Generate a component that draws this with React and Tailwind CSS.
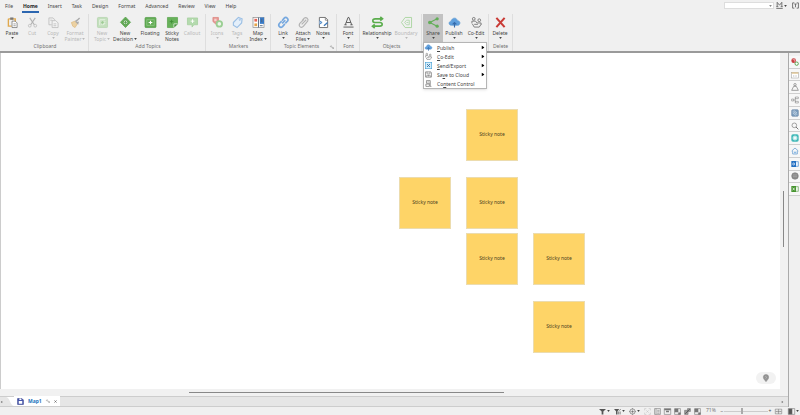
import React from "react";

const art = {
  paste: (
    <>
      <path d="M3 4h15v7M3 4v16h7" stroke="#e0a84e" strokeWidth="3" />
      <rect x="7" y="1" width="7" height="5" fill="#777" stroke="none" />
      <path d="M11 9h7l4 4v10H11z" fill="#fff" stroke="#666" />
      <path d="M14 15h5M14 19h5" stroke="#777" />
    </>
  ),
  cut: (
    <>
      <path d="M6 2l10 15M18 2L8 17" strokeWidth="2.5" />
      <circle cx="6" cy="19" r="3" />
      <circle cx="18" cy="19" r="3" />
    </>
  ),
  copy: (
    <>
      <path d="M8 17H2V2h9l3 3v2" />
      <path d="M9 8h8l5 5v10H9z" fill="#f7f7f7" />
      <path d="M12 15h6M12 19h6M5 7h4" />
    </>
  ),
  brush: (
    <>
      <path d="M3 12l8-3 5 6-5 8-5-3z" fill="#ecd2a4" stroke="#dcb87c" />
      <path d="M12 9l4-2 5-5M12 9l5 5 1-4" stroke="#aaa" strokeWidth="3" />
    </>
  ),
  topic: (
    <>
      <rect x="1" y="1" width="22" height="22" rx="2" fill="#c3dfbd" stroke="#b2d3ab" />
      <path d="M6 18V6h12M9 18l9-9M13 18l5-5" stroke="#e9f5e6" strokeWidth="2" />
      <path d="M12 9v6M9 12h6" stroke="#9ccb93" strokeWidth="2" />
    </>
  ),
  decision: (
    <>
      <path d="M12 0l11 11.500L12 23 1 11.500z" fill="#64ad57" stroke="#509c45" />
      <circle cx="12" cy="11.500" r="5" fill="#e7f4e4" stroke="#418c39" />
      <path d="M12 8v7M8.500 11.500h7" stroke="#559d4a" strokeWidth="2" />
    </>
  ),
  floating: (
    <>
      <rect x="0" y="1" width="24" height="22" rx="2" fill="#63ad55" stroke="#519b46" />
      <rect x="4" y="6" width="16" height="12" stroke="#95c98c" />
      <path d="M12 8v8M8 12h8" stroke="#fff" strokeWidth="2.500" />
    </>
  ),
  sticky: (
    <>
      <path d="M1 1h22v14l-8 8H1z" fill="#67b15a" stroke="#54a047" />
      <path d="M15 23v-8h8" fill="#448e3a" stroke="#fff" />
      <path d="M10 6v8M6 10h8" stroke="#3f8c36" strokeWidth="2" />
    </>
  ),
  callout: (
    <>
      <path d="M1 2h22v15h-8l-4 5v-5H1z" fill="#b4daae" stroke="#a1ce99" />
      <path d="M12 5v8M8 9h8" stroke="#fff" strokeWidth="2" />
    </>
  ),
  markers: (
    <>
      <path d="M2 1h12v11l-6 3-6-5z" fill="#e79a96" stroke="#da7d78" />
      <path d="M5 5h5M5 8h5" stroke="#fff" />
      <circle cx="16" cy="15" r="6" fill="#edf7ea" stroke="#9bcf94" strokeWidth="4" />
    </>
  ),
  tag: (
    <>
      <path d="M3 12L14 1l8 3-1 9-10 10-8-5z" fill="#e4effa" stroke="#9bbfe4" strokeWidth="2.500" />
      <circle cx="17" cy="6" r="1.500" stroke="#8db2da" />
    </>
  ),
  index: (
    <>
      <rect x="0" y="1" width="24" height="22" fill="#fff" stroke="#8a8a8a" />
      <path d="M3 4h6v6H3z" fill="#e56355" stroke="none" />
      <path d="M3 14h6v6H3z" fill="#e4a44b" stroke="none" />
      <path d="M15 1h9v14h-9z" fill="#397bc7" stroke="none" />
      <path d="M12 1v22M15 19h6M19 4v7" stroke="#52657c" strokeWidth="2" />
    </>
  ),
  link: (
    <path d="M9 14l7-7M9 8l4-5c5-5 11 1 8 6l-5 5M15 15l-5 6c-5 4-11-2-7-7l5-5" stroke="#76a8df" strokeWidth="3.500" />
  ),
  attach: (
    <path d="M8 16L18 6M9 8l4-5c5-4 11 1 8 6l-9 11c-5 6-12 0-8-6l9-9" strokeWidth="2.500" />
  ),
  notes: (
    <>
      <path d="M3 1h13l5 5v17H3z" fill="#fff" stroke="#6b6b6b" strokeWidth="2" />
      <path d="M16 1v6h5" stroke="#666" />
      <path d="M3 8l6 4-6 4" fill="#9cc3ed" stroke="#4380c0" strokeWidth="2" />
      <path d="M13 19l8-7" stroke="#3d79ba" strokeWidth="3" />
    </>
  ),
  font: (
    <>
      <path d="M5 17L11 1h2l6 16M7 12h10M3 17h5M16 17h5" stroke="#555" strokeWidth="2" />
      <path d="M1 22h22" stroke="#888" strokeWidth="3" />
    </>
  ),
  relation: (
    <path d="M23 4H7C0 4 0 12 7 12h10c7 0 7 8 0 8H1M18 0l5 4-5 4M6 16l-5 4 5 4" stroke="#5bad4d" strokeWidth="3.500" />
  ),
  boundary: (
    <>
      <path d="M1 12L9 1h14v22H9z" stroke="#a8d49f" strokeWidth="2" />
      <path d="M8 12l4-5h6v10h-6zM12 12h4" stroke="#b4d9ae" strokeWidth="2" />
    </>
  ),
  share: (
    <>
      <path d="M20 4L4 12l16 8" stroke="#63ae59" strokeWidth="2.500" />
      <circle cx="20" cy="4" r="3.500" fill="#63ae59" stroke="none" />
      <circle cx="4" cy="12" r="4" fill="#63ae59" stroke="none" />
      <circle cx="20" cy="20" r="3.500" fill="#63ae59" stroke="none" />
    </>
  ),
  cloud: (
    <>
      <path d="M6 18C-2 18-1 9 5 9 6 1 17 0 18 8c8 0 7 10 1 10z" fill="#5f9fdd" stroke="#5594d0" />
      <path d="M12 23V13M8 16l4-4 4 4" stroke="#366baa" strokeWidth="2.500" />
    </>
  ),
  coedit: (
    <>
      <circle cx="6" cy="4" r="3" strokeWidth="2" />
      <circle cx="18" cy="7" r="3" strokeWidth="2" />
      <path d="M2 14V9h8l3 4h9v4M3 15l4 7h11l4-6M7 16h8" strokeWidth="2" />
    </>
  ),
  delete: <path d="M3 2l18 20M21 2L3 22" stroke="#c93b36" strokeWidth="4.500" />,
  export: (
    <>
      <rect x="1" y="1" width="22" height="22" fill="#d6edfa" stroke="#3d9bd3" strokeWidth="2" />
      <path d="M7 7l10 10M17 7L7 17" stroke="#2c6fa4" strokeWidth="3" />
    </>
  ),
  save: (
    <>
      <path d="M2 3h18l2 3v15H2z" strokeWidth="2.500" />
      <path d="M7 3v7h10V3M6 21v-6h12v6M12 13v6" strokeWidth="2" />
    </>
  ),
  control: (
    <>
      <path d="M5 2h13v9H5zM3 14h12v8H3zM18 11v11h4" strokeWidth="2.500" />
      <path d="M8 6h7" />
    </>
  ),
  marks: (
    <>
      <circle cx="8" cy="8" r="7" fill="#ca3e40" stroke="none" />
      <path d="M5 5h6v6" stroke="#fff" />
      <circle cx="17" cy="17" r="5" fill="#fff" stroke="#5aa650" strokeWidth="3" />
    </>
  ),
  calendar: (
    <>
      <rect x="2" y="4" width="20" height="17" fill="#fff" stroke="#999" />
      <path d="M2 6h20" stroke="#dcc08a" strokeWidth="4" />
      <path d="M6 15h12" strokeDasharray="3 2" />
    </>
  ),
  person: (
    <>
      <circle cx="12" cy="5" r="3.500" strokeWidth="2" />
      <path d="M2 22l6-12h8l6 12z" strokeWidth="2" />
    </>
  ),
  layers: (
    <path d="M2 9h6v6H2zM13 3h9v5h-9zM13 16h9v5h-9zM8 12h5V5M13 12v7" />
  ),
  library: (
    <>
      <rect x="2" y="2" width="20" height="20" rx="3" fill="#7c9dbd" stroke="#58789c" />
      <path d="M5 7l14 10M8 4l10 8M5 12l10 7" stroke="#d9e6f1" strokeWidth="2" />
    </>
  ),
  search: (
    <>
      <circle cx="10" cy="10" r="7" strokeWidth="2" />
      <path d="M15 15l7 7" strokeWidth="3" />
    </>
  ),
  sync: (
    <>
      <rect x="1" y="1" width="22" height="22" rx="5" fill="#42b9b8" stroke="none" />
      <circle cx="12" cy="12" r="6" fill="#effafa" stroke="#b9e8e8" strokeWidth="3" />
    </>
  ),
  home: (
    <>
      <path d="M2 12L12 3l10 9M5 11v10h14V11" stroke="#72a3d3" strokeWidth="2.500" />
      <path d="M9 14h7v5H9z" fill="#8dbce7" stroke="none" />
    </>
  ),
  outlook: (
    <>
      <path d="M12 5h10v14H12" fill="#edf5ff" stroke="#4286cb" strokeWidth="2" />
      <path d="M1 3h14v18H1z" fill="#226fc2" stroke="none" />
      <circle cx="8" cy="12" r="3" stroke="#fff" strokeWidth="2" />
    </>
  ),
  globe: (
    <>
      <circle cx="12" cy="12" r="10" fill="#8b8b8b" stroke="#777" />
      <path d="M6 9h12M6 14h12" stroke="#aaa" strokeWidth="2" />
    </>
  ),
  excel: (
    <>
      <path d="M12 5h10v14H12" fill="#eef8ec" stroke="#66a456" strokeWidth="2" />
      <path d="M1 3h14v18H1z" fill="#46942f" stroke="none" />
      <path d="M5 8l6 8M11 8l-6 8" stroke="#fff" strokeWidth="2" />
    </>
  ),
  doc: (
    <>
      <path d="M2 2h15l5 5v15H2z" fill="#4857ad" stroke="#303d8c" strokeWidth="2" />
      <path d="M6 10h12v10H6zM8 2h7v5H8z" fill="#fff" stroke="none" />
    </>
  ),
  brand: (
    <path d="M4 1v15M4 1l8 10 8-10v15M1 16h7M16 16h7M1 22h22" stroke="#666" strokeWidth="3" />
  ),
  frame: (
    <path d="M8 3H2v18h6M16 3h6v18h-6M8 7h8M12 7v11" stroke="#666" strokeWidth="3" />
  ),
  pin: (
    <>
      <path d="M12 23C7 17 4 14 4 9c0-10 16-10 16 0 0 5-3 8-8 14z" fill="#929292" stroke="#888" />
      <path d="M9 7l6 3-5 4" stroke="#b8b8b8" strokeWidth="2" />
    </>
  ),
  filter: <path d="M0 3h24l-9 9v10H9V12z" fill="#555" stroke="none" />,
  filterEdit: (
    <>
      <path d="M0 3h18l-6 8v11H7V11z" fill="#555" stroke="none" />
      <path d="M16 12v10M21 12v10M23 4l-5 5" stroke="#777" strokeWidth="3" />
    </>
  ),
  target: (
    <>
      <circle cx="12" cy="12" r="9" strokeWidth="2.500" />
      <circle cx="12" cy="12" r="3" fill="#777" />
      <path d="M12 0v5M12 19v5M0 12h5M19 12h5" strokeWidth="2" />
    </>
  ),
  expand: <path d="M2 8V2h6M16 2h6v6M22 16v6h-6M8 22H2v-6M8 8l8 8M16 8l-8 8" stroke="#c2c2c2" strokeWidth="2" />,
  outline: <path d="M2 2h20v20H2zM7 2v20M11 8h8M11 13h8M11 18h8" strokeWidth="2" />,
  windowed: (
    <>
      <path d="M1 2h22v20H1z" strokeWidth="2" />
      <path d="M1 5h22M7 12h10" strokeWidth="5" />
    </>
  ),
  tiled: (
    <>
      <path d="M2 2h20v20H2z" strokeWidth="2" />
      <path d="M3 3h11v11H3zM15 16h7v6h-7z" fill="#777" />
    </>
  ),
  linked: (
    <>
      <path d="M2 8h12v14H2zM12 2h10v10H12z" fill="#999" strokeWidth="2" />
      <path d="M4 20L20 4" stroke="#555" strokeWidth="3" />
    </>
  ),
  fit: <path d="M1 4h22v16H1zM12 4v16M4 12h16M7 9l-3 3 3 3M17 9l3 3-3 3" strokeWidth="2" />,
  sidebar: (
    <>
      <path d="M1 2h22v20H1z" strokeWidth="2" />
      <path d="M2 3h12v18H2z" fill="#555" />
    </>
  ),
  edit: <path d="M2 9l5-5 4 5-4 4zM11 12l9 9M14 20h7v-6" strokeWidth="3" />,
  close: <path d="M3 3l18 18M21 3L3 21" stroke="#555" strokeWidth="5" />,
};

function Icon({ name, className = "size-[11px]" }) {
  return (
    <svg viewBox="0 0 24 24" aria-hidden="true" className={`${className} shrink-0 overflow-visible`} fill="none" stroke="#777" strokeWidth="1.5">
      {art[name]}
    </svg>
  );
}

function Caret({ className = "", size = "h-[2px] w-[3px]" }) {
  return (
    <svg viewBox="0 0 4 3" aria-hidden="true" className={`inline-block shrink-0 ${size} ${className}`}>
      <path d="M0 0h4L2 3z" fill="currentColor" />
    </svg>
  );
}

const groups = [
  { title: "Clipboard", cls: "w-[89px] pl-[2px]", items: [
    ["Paste", null, "paste", "w-5", true],
    ["Cut", null, "cut", "w-5", false, true],
    ["Copy", null, "copy", "w-[22px]", true, true],
    ["Format", "Painter", "brush", "w-[22px]", true, true],
  ] },
  { title: "Add Topics", cls: "w-[117px] pl-[2px]", items: [
    ["New", "Topic", "topic", "w-[22px]", true, true],
    ["New", "Decision", "decision", "w-6", true],
    ["Floating", null, "floating", "w-[26px]"],
    ["Sticky", "Notes", "sticky", "w-[18px]"],
    ["Callout", null, "callout", "w-[22px]", false, true],
  ] },
  { title: "Markers", cls: "w-[65px] pl-px", items: [
    ["Icons", null, "markers", "w-5", true, true],
    ["Tags", null, "tag", "w-5", true, true],
    ["Map", "Index", "index", "w-[22px]", true],
  ] },
  { title: "Topic Elements", cls: "w-[66px] pl-[2px]", launcher: true, items: [
    ["Link", null, "link", "w-5", true],
    ["Attach", "Files", "attach", "w-5", true],
    ["Notes", null, "notes", "w-5", true],
  ] },
  { title: "Font", cls: "w-[23px] pl-px", items: [["Font", null, "font", "w-5", true]] },
  { title: "Objects", cls: "w-[62px] pl-[2px]", items: [
    ["Relationship", null, "relation", "w-[30px]", true],
    ["Boundary", null, "boundary", "w-7", true, true],
  ] },
  { title: "", cls: "w-[67px] pl-px", items: [
    ["Share", null, "share", "w-5", true],
    ["Publish", null, "cloud", "w-[22px]", true],
    ["Co-Edit", null, "coedit", "w-[22px]", true],
  ] },
  { title: "Delete", cls: "w-6", items: [["Delete", null, "delete", "w-[22px]", true]] },
];

const shareMenu = [
  ["", "P", "ublish", "cloud", true],
  ["", "C", "o-Edit", "coedit", true],
  ["", "S", "end/Export", "export", true],
  ["Sa", "v", "e to Cloud", "save", true],
  ["Co", "n", "tent Control", "control", false],
];

function ShareMenu() {
  return (
    <ul role="menu" className="absolute top-full left-0 z-10 w-16 border border-[#b5b5b5] bg-white shadow-sm">
      {shareMenu.map(([before, key, after, icon, sub]) => (
        <li key={icon} role="none">
          <button role="menuitem" className="flex h-[9px] w-full items-center gap-[5px] px-px text-left leading-[8px]">
            <Icon name={icon} className="size-[7px]" />
            <span className="flex-1 whitespace-nowrap">{before}<u>{key}</u>{after}</span>
            {sub && <Caret size="h-[3px] w-1" className="-rotate-90 text-black" />}
          </button>
        </li>
      ))}
    </ul>
  );
}

function RibbonButton({ item }) {
  const [first, second, icon, width, caret, disabled] = item;
  const open = first === "Share";
  const faded = ["cut", "copy", "attach"].includes(icon);
  return (
    <div className={`relative ${width}`}>
      <button
        disabled={disabled}
        aria-expanded={open ? true : undefined}
        className={`flex h-7 w-full flex-col items-center pt-[3px] leading-[6px] whitespace-nowrap ${open ? "bg-[#c2c2c2]" : ""} ${disabled ? "text-[#b8b8b8]" : "text-[#444]"}`}
      >
        <Icon name={icon} className={faded ? "size-[11px] opacity-50" : "size-[11px]"} />
        <span className="mt-[2px]">{first}</span>
        {second ? (
          <span className="flex items-center gap-px">{second}{caret && <Caret />}</span>
        ) : (
          caret && <Caret className="mt-px" />
        )}
      </button>
      {open && <ShareMenu />}
    </div>
  );
}

function Header() {
  const tabs = ["File", "Home", "Insert", "Task", "Design", "Format", "Advanced", "Review", "View", "Help"];
  return (
    <header className="border-b-2 border-[#9a9a9a] bg-[#f0f0f0]">
      <div className="flex h-[13px] items-start">
        <nav aria-label="Ribbon tabs" className="flex gap-2 pl-1">
          {tabs.map((tab) => (
            <button
              key={tab}
              className={`h-[13px] border-b-2 px-px pt-[2px] leading-[9px] ${tab === "Home" ? "border-[#2c66b0] font-bold text-[#222]" : "border-transparent"}`}
            >
              {tab}
            </button>
          ))}
        </nav>
        <div className="ml-auto flex items-center gap-[2px] pt-[2px]">
          <div className="relative flex items-center">
            <select aria-label="Search commands" className="h-[7px] w-[50px] appearance-none border border-[#ddd] bg-white">
              <option></option>
            </select>
            <Caret className="pointer-events-none absolute right-[2px] text-[#888]" />
          </div>
          <button aria-label="Account" className="flex items-center gap-px"><Icon name="brand" className="size-[7px]" /><Caret /></button>
          <button aria-label="Display options" className="mr-px ml-[3px]"><Icon name="frame" className="size-[7px]" /></button>
        </div>
      </div>
      <div className="flex h-[38px] pt-px">
        {groups.map((group) => (
          <section key={group.cls + group.title} aria-label={group.title || "Share"} className={`relative shrink-0 border-r border-[#dedede] ${group.cls}`}>
            <div className="flex">
              {group.items.map((item) => <RibbonButton key={item[0] + item[1]} item={item} />)}
            </div>
            <div className="flex items-center pt-px leading-[7px] whitespace-nowrap text-[#707070]">
              <span className="flex-1 text-center">{group.title}</span>
              {group.launcher && <button aria-label="Topic element options" className="mr-[2px]"><Icon name="edit" className="size-1" /></button>}
            </div>
          </section>
        ))}
      </div>
    </header>
  );
}

const notes = [
  "left-[466px] top-[56px]",
  "left-[399px] top-[124px]",
  "left-[466px] top-[124px]",
  "left-[466px] top-[180px]",
  "left-[533px] top-[180px]",
  "left-[533px] top-[248px]",
];

function Canvas() {
  return (
    <main className="flex flex-1 bg-[#f1f1f1]">
      <div className="relative flex-1 border-l border-[#ccc] bg-white">
        {notes.map((place) => (
          <div key={place} className={`absolute flex size-[52px] -translate-x-px items-center justify-center border border-[#ecdcae] bg-[#fed467] text-[#4b401f] ${place}`}>
            Sticky note
          </div>
        ))}
        <button aria-label="Show guide" className="absolute right-1 bottom-[5px] flex h-3 w-5 items-center justify-center rounded-md bg-[#f2f2f2]">
          <Icon name="pin" className="size-2" />
        </button>
      </div>
      <div className="w-2 pt-[138px] pl-[3px]">
        <div className="h-14 w-px bg-[#888]" />
      </div>
    </main>
  );
}

const panels = ["marks", "calendar", "person", "layers", "library", "search", "sync", "home", "outlook", "globe", "excel"];

function SidePanel() {
  return (
    <aside className="w-3 border-l border-[#aaa] bg-[#f0f0f0] pt-[3px]">
      <div className="flex h-[140px] flex-col">
        {panels.map((name) => (
          <button key={name} aria-label={name} className="flex flex-1 items-center justify-center border-b border-[#cfcfcf] bg-[#f7f7f7]">
            <Icon name={name} className="size-2" />
          </button>
        ))}
      </div>
    </aside>
  );
}

function DocumentTabs() {
  return (
    <div className="flex h-[11px] items-stretch border-y border-[#cdcdcd] bg-[#e6e6e6]">
      <button aria-label="Scroll tabs left" className="flex w-[6px] items-center text-[#666]"><Caret className="rotate-90" /></button>
      <svg viewBox="0 0 8 9" aria-hidden="true" className="h-full w-2" preserveAspectRatio="none"><path d="M0 0h8v9C4 9 4 0 0 0z" fill="#fff" /></svg>
      <div className="-mt-px flex items-center gap-1 bg-white px-[3px] leading-[9px]">
        <Icon name="doc" className="size-[7px]" />
        <button className="font-bold text-[#2373bd]">Map1</button>
        <button aria-label="Rename map"><Icon name="edit" className="size-1" /></button>
        <button aria-label="Close map"><Icon name="close" className="size-[3px]" /></button>
      </div>
      <button aria-label="Scroll tabs right" className="mr-1 ml-auto flex items-center text-[#666]"><Caret className="-rotate-90" /></button>
    </div>
  );
}

function StatusBar() {
  const views = ["expand", "outline", "windowed", "tiled", "linked", "tiled"];
  return (
    <footer className="flex h-2 items-center justify-end bg-[#f0f0f0] pr-px">
      <div className="flex items-center gap-[3px]">
        {["filter", "filterEdit", "target"].map((name) => (
          <button key={name} aria-label={name} className="flex w-3 items-center gap-px"><Icon name={name} className="size-[7px]" /><Caret /></button>
        ))}
        {views.map((name, i) => (
          <button key={i} aria-label={`View ${i + 1}`}><Icon name={name} className="size-[7px]" /></button>
        ))}
      </div>
      <span className="ml-[5px] w-[14px] text-[#777]">71%</span>
      <button aria-label="Zoom out" className="w-1 leading-[6px]">−</button>
      <input
        type="range"
        aria-label="Zoom"
        min="0"
        max="100"
        defaultValue="40"
        className="h-[6px] w-11 appearance-none bg-[linear-gradient(#ccc,#ccc)] bg-[length:100%_1px] bg-center bg-no-repeat [&::-webkit-slider-thumb]:h-[6px] [&::-webkit-slider-thumb]:w-[2px] [&::-webkit-slider-thumb]:appearance-none [&::-webkit-slider-thumb]:bg-[#aaa]"
      />
      <button aria-label="Zoom in" className="w-1 leading-[6px]">+</button>
      <button aria-label="Fit map" className="ml-[3px]"><Icon name="fit" className="size-[7px]" /></button>
      <button aria-label="Task panes" className="ml-[6px] flex items-center gap-px"><Icon name="sidebar" className="size-[7px]" /><Caret /></button>
    </footer>
  );
}

export default function App() {
  return (
    <div className="flex h-screen flex-col overflow-hidden bg-[#f0f0f0] font-['Noto_Sans',sans-serif] text-[5px] text-[#444]">
      <Header />
      <div className="flex min-h-0 flex-1">
        <div className="flex min-w-0 flex-1 flex-col">
          <Canvas />
          <div className="flex h-[7px] items-center bg-[#f1f1f1]">
            <div className="ml-[24%] h-px w-[40%] bg-[#888]" />
          </div>
          <DocumentTabs />
        </div>
        <SidePanel />
      </div>
      <StatusBar />
    </div>
  );
}
